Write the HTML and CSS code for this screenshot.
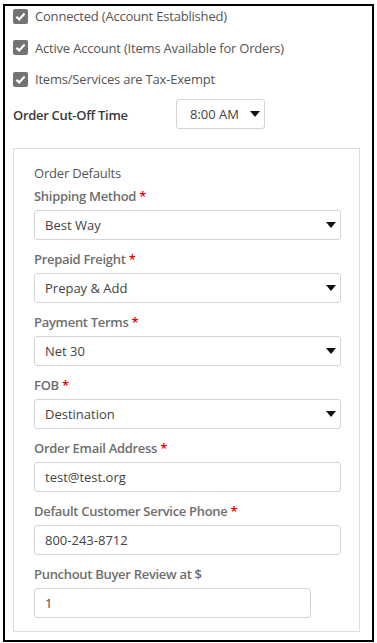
FILE: index.html
```html
<!DOCTYPE html>
<html>
  <head>
    <link rel="stylesheet" href="styles.css">
  </head>
  <body>
    <div class="frame">
      <label class="check-row">
        <span class="check-box"><svg viewBox="0 0 15 15" width="15" height="15"><path d="M3.4 7.8 L6.2 10.4 L11.6 4.5" fill="none" stroke="#fff" stroke-width="2.2"/></svg></span>
        Connected (Account Established)
      </label>
      <label class="check-row">
        <span class="check-box"><svg viewBox="0 0 15 15" width="15" height="15"><path d="M3.4 7.8 L6.2 10.4 L11.6 4.5" fill="none" stroke="#fff" stroke-width="2.2"/></svg></span>
        Active Account (Items Available for Orders)
      </label>
      <label class="check-row">
        <span class="check-box"><svg viewBox="0 0 15 15" width="15" height="15"><path d="M3.4 7.8 L6.2 10.4 L11.6 4.5" fill="none" stroke="#fff" stroke-width="2.2"/></svg></span>
        Items/Services are Tax-Exempt
      </label>

      <div class="cutoff-row">
        <span class="cutoff-label">Order Cut-Off Time</span>
        <div class="select-wrap cutoff-select">
          <select><option>8:00 AM</option></select>
          <svg class="caret" viewBox="0 0 10 6" width="10" height="6"><path d="M0 0 H10 L5 6 Z" fill="#111"/></svg>
        </div>
      </div>

      <div class="panel">
        <div class="panel-title">Order Defaults</div>

        <div class="field">
          <div class="field-label">Shipping Method <span class="req">*</span></div>
          <div class="select-wrap">
            <select><option>Best Way</option></select>
            <svg class="caret" viewBox="0 0 10 6" width="10" height="6"><path d="M0 0 H10 L5 6 Z" fill="#111"/></svg>
          </div>
        </div>

        <div class="field">
          <div class="field-label">Prepaid Freight <span class="req">*</span></div>
          <div class="select-wrap">
            <select><option>Prepay &amp; Add</option></select>
            <svg class="caret" viewBox="0 0 10 6" width="10" height="6"><path d="M0 0 H10 L5 6 Z" fill="#111"/></svg>
          </div>
        </div>

        <div class="field">
          <div class="field-label">Payment Terms <span class="req">*</span></div>
          <div class="select-wrap">
            <select><option>Net 30</option></select>
            <svg class="caret" viewBox="0 0 10 6" width="10" height="6"><path d="M0 0 H10 L5 6 Z" fill="#111"/></svg>
          </div>
        </div>

        <div class="field">
          <div class="field-label">FOB <span class="req">*</span></div>
          <div class="select-wrap">
            <select><option>Destination</option></select>
            <svg class="caret" viewBox="0 0 10 6" width="10" height="6"><path d="M0 0 H10 L5 6 Z" fill="#111"/></svg>
          </div>
        </div>

        <div class="field">
          <div class="field-label">Order Email Address <span class="req">*</span></div>
          <input class="text-input" type="text" value="test@test.org">
        </div>

        <div class="field">
          <div class="field-label">Default Customer Service Phone <span class="req">*</span></div>
          <input class="text-input" type="text" value="800-243-8712">
        </div>

        <div class="field last">
          <div class="field-label">Punchout Buyer Review at $</div>
          <input class="text-input short" type="text" value="1">
        </div>
      </div>
    </div>
  </body>
</html>
```

FILE: styles.css
```css
body {
  margin: 0;
  background-color: #fff;
  font-family: "Open Sans", "Noto Sans", sans-serif;
  font-size: 13px;
  color: #555;
}

.frame {
  width: 371px;
  margin: 4px 0 0 3px;
  border: 2px solid #000;
  padding: 0 0 8px 8px;
  box-sizing: border-box;
}

.check-row {
  display: flex;
  align-items: center;
  height: 20px;
  margin-bottom: 11.5px;
  color: #555;
  letter-spacing: -0.2px;
}

.check-box {
  width: 15px;
  height: 15px;
  border-radius: 2px;
  background-color: #737373;
  margin-right: 7px;
  display: flex;
}

.cutoff-row {
  display: flex;
  align-items: center;
  margin-top: -2px;
}

.cutoff-label {
  width: 163px;
  font-weight: 600;
  color: #3a3a3a;
  padding-top: 3px;
  letter-spacing: -0.3px;
}

.select-wrap {
  position: relative;
}

.select-wrap select {
  appearance: none;
  -webkit-appearance: none;
  width: 100%;
  height: 30px;
  border: 1px solid #d4d4d4;
  border-radius: 3px;
  background-color: #fff;
  font-family: inherit;
  font-size: 13px;
  color: #444;
  padding: 0 10px;
  display: block;
}

.caret {
  position: absolute;
  right: 5px;
  top: 12px;
}

.cutoff-select {
  width: 89px;
}

.cutoff-select select {
  padding-left: 13px;
}

.panel {
  margin-top: 19px;
  width: 347px;
  border: 1px solid #ddd;
  box-sizing: border-box;
  padding: 14px 18px 13px 20px;
}

.panel-title {
  line-height: 20px;
  margin-bottom: 3px;
  color: #555;
  letter-spacing: -0.2px;
}

.field {
  margin-bottom: 9px;
}

.field.last {
  margin-bottom: 0;
}

.field-label {
  line-height: 20px;
  margin-bottom: 4px;
  font-weight: 600;
  color: #6e6e6e;
  letter-spacing: -0.3px;
}

.req {
  color: #e00;
}

.text-input {
  display: block;
  width: 100%;
  height: 30px;
  box-sizing: border-box;
  border: 1px solid #d4d4d4;
  border-radius: 3px;
  font-family: inherit;
  font-size: 13px;
  color: #444;
  padding: 0 10px;
}

.text-input.short {
  width: 277px;
}
```
